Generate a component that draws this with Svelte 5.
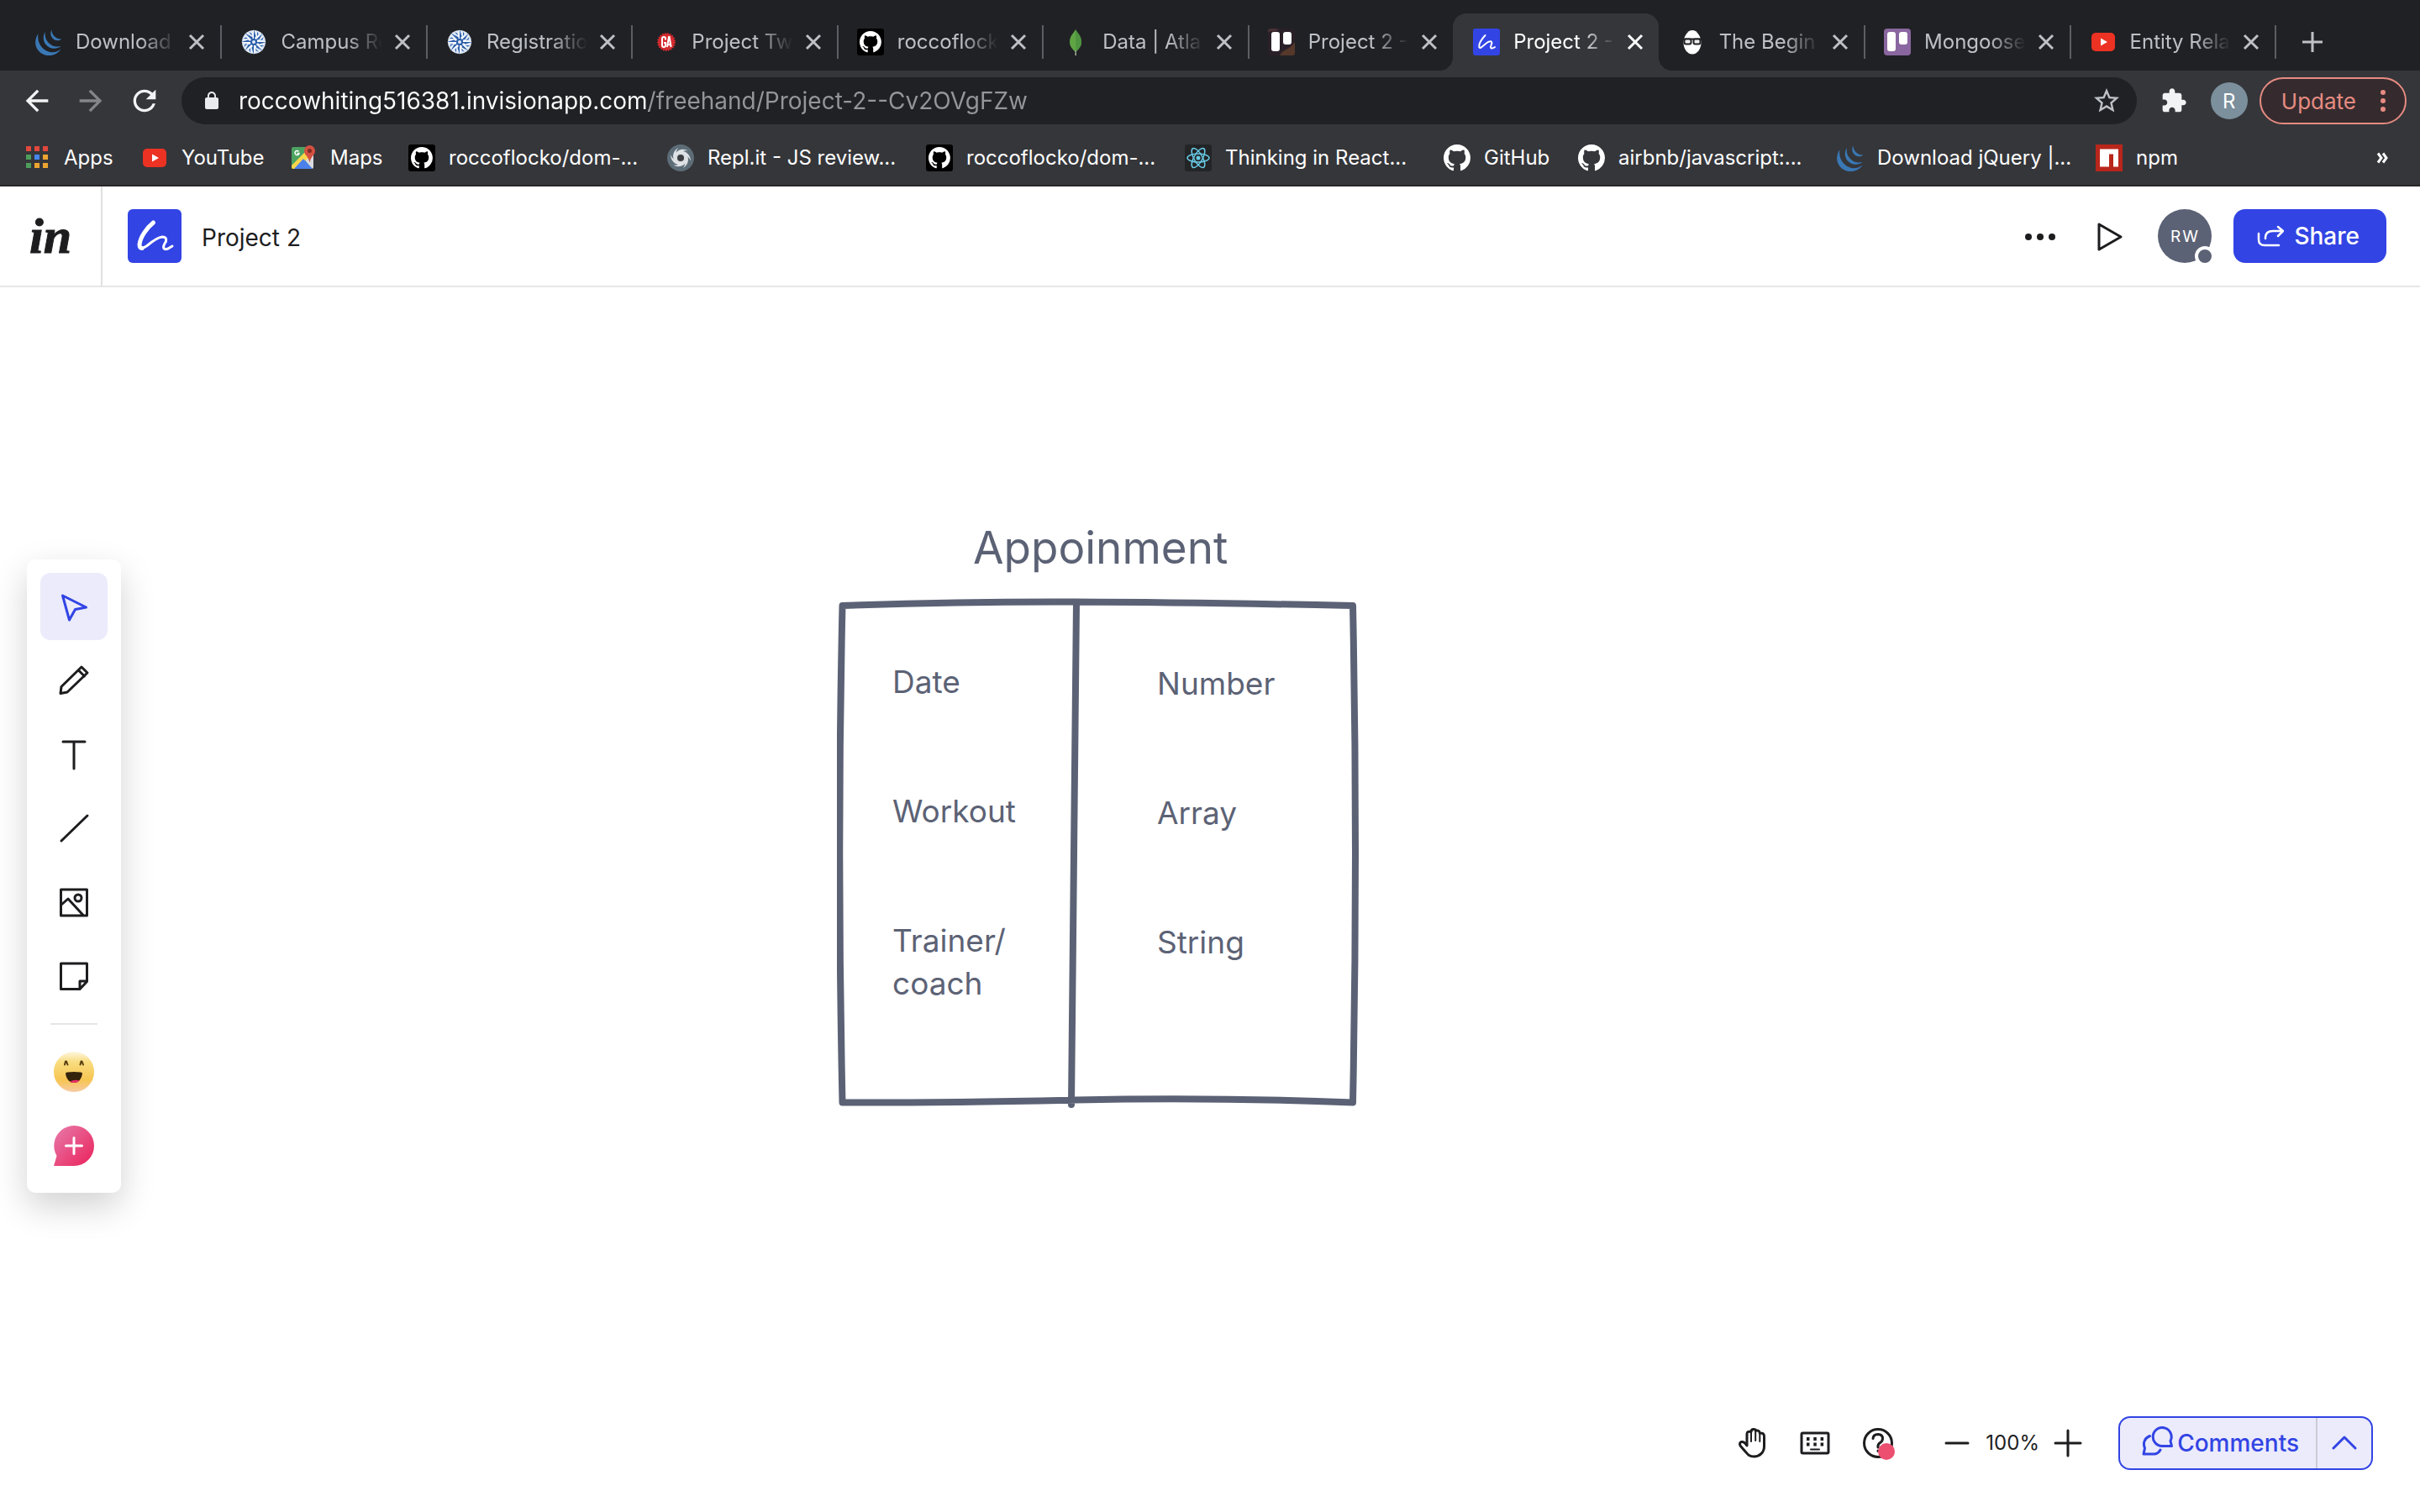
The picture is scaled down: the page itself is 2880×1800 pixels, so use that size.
<script>
  const tabs = [
    { icon: 'jquery', title: 'Download' },
    { icon: 'compass', title: 'Campus Re' },
    { icon: 'compass', title: 'Registratio' },
    { icon: 'ga', title: 'Project Tw' },
    { icon: 'githubBox', title: 'roccoflock' },
    { icon: 'mongo', title: 'Data | Atla' },
    { icon: 'trelloPhoto', title: 'Project 2 -', beforeActive: true },
    { icon: 'freehand', title: 'Project 2 -', active: true },
    { icon: 'egghead', title: 'The Begin' },
    { icon: 'trello', title: 'Mongoose' },
    { icon: 'youtube', title: 'Entity Rela' }
  ];

  const bookmarks = [
    { icon: 'apps', label: 'Apps', width: 140 },
    { icon: 'youtube', label: 'YouTube', width: 177 },
    { icon: 'maps', label: 'Maps', width: 141 },
    { icon: 'githubBox', label: 'roccoflocko/dom-...', width: 308 },
    { icon: 'replit', label: 'Repl.it - JS review...', width: 308 },
    { icon: 'githubBox', label: 'roccoflocko/dom-...', width: 308 },
    { icon: 'react', label: 'Thinking in React...', width: 308 },
    { icon: 'github', label: 'GitHub', width: 160 },
    { icon: 'github', label: 'airbnb/javascript:...', width: 308 },
    { icon: 'jquery', label: 'Download jQuery |...', width: 308 },
    { icon: 'npm', label: 'npm', width: 140 }
  ];

  const tools = [
    { id: 'select', label: 'Select' },
    { id: 'draw', label: 'Draw' },
    { id: 'text', label: 'Text' },
    { id: 'line', label: 'Line' },
    { id: 'image', label: 'Image' },
    { id: 'note', label: 'Sticky note' }
  ];

  const notes = [
    { text: 'Date', x: 1062, y: 444 },
    { text: 'Workout', x: 1062, y: 598 },
    { text: 'Trainer/\ncoach', x: 1062, y: 752 },
    { text: 'Number', x: 1377, y: 446 },
    { text: 'Array', x: 1377, y: 600 },
    { text: 'String', x: 1377, y: 754 }
  ];

  let activeTool = $state('select');
  let url = $state('roccowhiting516381.invisionapp.com/freehand/Project-2--Cv2OVgFZw');

  const octocat =
    'M8 0C3.58 0 0 3.58 0 8c0 3.54 2.29 6.53 5.47 7.59.4.07.55-.17.55-.38 0-.19-.01-.82-.01-1.49-2.01.37-2.53-.49-2.69-.94-.09-.23-.48-.94-.82-1.13-.28-.15-.68-.52-.01-.53.63-.01 1.08.58 1.23.82.72 1.21 1.87.87 2.33.66.07-.52.28-.87.51-1.07-1.78-.2-3.64-.89-3.64-3.95 0-.87.31-1.59.82-2.15-.08-.2-.36-1.02.08-2.12 0 0 .67-.21 2.2.82.64-.18 1.32-.27 2-.27s1.36.09 2 .27c1.53-1.04 2.2-.82 2.2-.82.44 1.1.16 1.92.08 2.12.51.56.82 1.27.82 2.15 0 3.07-1.87 3.75-3.65 3.95.29.25.54.73.54 1.48 0 1.07-.01 1.93-.01 2.2 0 .21.15.46.55.38A8.01 8.01 0 0 0 16 8c0-4.42-3.58-8-8-8z';
  const spokes = [0, 45, 90, 135, 180, 225, 270, 315];
  const swirls = [0, 60, 120, 180, 240, 300];
</script>

{#snippet favicon(name)}
  <svg class="favicon" viewBox="0 0 32 32" aria-hidden="true">
    {#if name === 'jquery'}
      <g fill="#3a78b5">
        <path d="M3.500 6C-.5 12-1 19 2.500 24.500c4.500 7.500 13.500 9 20 6.500 3.500-1.200 6.500-4 8-6.500-4 3.500-10.500 5-16 2.500C6 23 2 15 3.500 6z" />
        <path d="M12 4c-3 4-3 10 0 14.500 4.500 6 13 7 18.500 2.500-5 1-10 .5-13.500-3C12.500 14 11 9 12 4z" />
        <path d="M19.500 1.500c-2 3.500-1.500 7.500 1.500 10.500 3 2.800 7 3 10.500.5-3.500.2-6.500-.8-9-3.500-2-2.200-3-4.500-3-7.500z" />
      </g>
    {:else if name === 'compass'}
      <circle cx="16" cy="16" r="14" fill="#dfe9f6" />
      {#each spokes as angle}
        <g transform="rotate({angle} 16 16)">
          <path d="M16 1l3 10-3 3-3-3z" fill="#f6f9fd" />
          <path d="M16 1l3 10-3 3z" fill="#2a5ca8" />
          <path d="M20 3.500l1.500 3-1.500 3z" fill="#2a5ca8" />
        </g>
      {/each}
      <circle cx="16" cy="16" r="4" fill="#2a5ca8" />
      <circle cx="16" cy="16" r="2" fill="#dfe9f6" />
    {:else if name === 'ga'}
      <circle cx="18" cy="16" r="10" fill="#d52b30" stroke="#d52b30" stroke-dasharray="1.500 1.500" stroke-width="2" />
      <g fill="none" stroke="#fff" stroke-width="2">
        <path d="M17 13.500V12a2 2 0 0 0-4 0v8a2 2 0 0 0 4 0v-3h-2" />
        <path d="M19 22l2-12h.6l2 12M20 19h3" />
      </g>
    {:else if name === 'githubBox'}
      <rect width="32" height="32" rx="3" fill="#000" />
      <path transform="translate(3 3) scale(1.62)" d={octocat} fill="#fff" />
    {:else if name === 'github'}
      <path transform="scale(2)" d={octocat} fill="#fff" />
    {:else if name === 'mongo'}
      <path d="M16 1c1 3 7 7 7 15 0 6-4 9-6.500 11.500h-1C13 25 9 22 9 16 9 8 15 4 16 1z" fill="#5fa544" />
      <path d="M16 1c1 3 7 7 7 15 0 6-4 9-6.500 11.500z" fill="#4f9440" />
      <path d="M15.500 26h1l.5 6h-1.500z" fill="#b8bfae" />
    {:else if name === 'trelloPhoto'}
      <rect width="32" height="32" rx="3" fill="#2a2027" />
      <path d="M14 32c4-8 12-6 18-16v13a3 3 0 0 1-3 3z" fill="#56382b" />
      <path d="M0 5c5-5 9 2 12-5H3a3 3 0 0 0-3 3z" fill="#4a3037" />
      <rect x="4" y="4" width="10" height="23" rx="3" fill="#fff" />
      <rect x="18" y="4" width="10" height="15" rx="3" fill="#fff" />
    {:else if name === 'freehand'}
      <rect width="32" height="32" rx="3" fill="#3244e4" />
      <path d="M14.500 8C10 13 6.500 19 7.500 22.500c1 2.500 6-4 10.500-6.500 5-2 5 1 3.500 4-1.500 4 1 4.500 4.500 2" fill="none" stroke="#fff" stroke-width="2" stroke-linecap="round" />
    {:else if name === 'egghead'}
      <path d="M16 2c6 0 10.500 8 10.500 15S22 30.500 16 30.500 5.500 24 5.500 17 10 2 16 2z" fill="#fff" />
      <path d="M3.500 12.500h25" stroke="#202124" stroke-width="2" />
      <rect x="6.500" y="12.500" width="8" height="6" rx="2" fill="#eee" stroke="#202124" stroke-width="2" />
      <rect x="17.500" y="12.500" width="8" height="6" rx="2" fill="#eee" stroke="#202124" stroke-width="2" />
    {:else if name === 'trello'}
      <rect width="32" height="32" rx="4" fill="#8a66a0" />
      <rect x="4" y="4" width="10" height="23" rx="3" fill="#fff" />
      <rect x="18" y="4" width="10" height="15" rx="3" fill="#fff" />
    {:else if name === 'youtube'}
      <rect x="2" y="5" width="28" height="22" rx="5" fill="#eb3223" />
      <path d="M13 11.500l8 4.500-8 4.500z" fill="#fff" />
    {:else if name === 'apps'}
      <g>
        <path d="M3 2h6v6H3zM13 2h6v6h-6zM23 2h6v6h-6z" fill="#e2483d" />
        <path d="M3 12h6v6H3zM3 22h6v6H3z" fill="#4e9d5b" />
        <path d="M13 12h6v6h-6z" fill="#4787ee" />
        <path d="M23 12h6v6h-6zM13 22h6v6h-6zM23 22h6v6h-6z" fill="#eda531" />
      </g>
    {:else if name === 'maps'}
      <path d="M4 3h22v26H4a2 2 0 0 1-2-2V5a2 2 0 0 1 2-2z" fill="#4ca261" />
      <path d="M16 16l12-6v17a2 2 0 0 1-2 2z" fill="#d9dbe0" />
      <path d="M2 25l18-18 6 6L6 29H4a2 2 0 0 1-2-2z" fill="#f8d64c" />
      <path d="M5 29l11-12 11 12z" fill="#4b80ea" />
      <path d="M10.500 8.500a2.500 2.500 0 1 0 .5 2H8.500" fill="none" stroke="#fff" stroke-width="1.500" />
      <path d="M23.500 1a6.500 6.500 0 0 1 6.500 6.500c0 5-5 6.500-6.500 14-1.500-7.500-6.500-9-6.500-14A6.500 6.500 0 0 1 23.500 1z" fill="#d45040" />
      <circle cx="23.500" cy="7.500" r="2.500" fill="#7c2a22" />
    {:else if name === 'replit'}
      <circle cx="16" cy="16" r="16" fill="#5d6d77" />
      {#each swirls as angle}
        <path transform="rotate({angle} 16 16)" d="M16 9q9-1 9 10-1 6-6 9 4-6 2.500-11Q20 11 16 9z" fill="#dfe3e6" />
      {/each}
      <circle cx="16" cy="16" r="6" fill="#d9dddf" />
      <circle cx="16" cy="16" r="4" fill="#3c3e42" />
    {:else if name === 'react'}
      <rect width="32" height="32" rx="3" fill="#222426" />
      <g fill="none" stroke="#69cbe6" stroke-width="1.500">
        <ellipse cx="16" cy="16" rx="13" ry="5" />
        <ellipse cx="16" cy="16" rx="13" ry="5" transform="rotate(60 16 16)" />
        <ellipse cx="16" cy="16" rx="13" ry="5" transform="rotate(120 16 16)" />
      </g>
      <circle cx="16" cy="16" r="2.500" fill="#69cbe6" />
    {:else if name === 'npm'}
      <rect width="32" height="32" fill="#b9261b" />
      <path d="M5 5.500h22v21h-6v-15h-5v15H5z" fill="#fff" />
    {/if}
  </svg>
{/snippet}

<div class="window">
  <header class="chrome">
    <nav class="tab-strip" aria-label="Browser tabs">
      <div class="tabs">
        {#each tabs as tab}
          <div class="tab" class:active={tab.active} class:plain={tab.active || tab.beforeActive}>
            <button class="tab-main">
              {@render favicon(tab.icon)}
              <span class="tab-title">{tab.title}</span>
            </button>
            <button class="tab-close" aria-label="Close tab">
              <svg viewBox="0 0 20 20"><path d="M2 2l16 16M18 2L2 18" /></svg>
            </button>
          </div>
        {/each}
      </div>
      <button class="new-tab" aria-label="New tab">
        <svg viewBox="0 0 24 24"><path d="M12 0v24M0 12h24" /></svg>
      </button>
    </nav>

    <div class="toolbar">
      <button class="nav" aria-label="Back">
        <svg viewBox="0 0 24 24"><path d="M20 11H7.830l5.590-5.590L12 4l-8 8 8 8 1.410-1.410L7.830 13H20v-2z" /></svg>
      </button>
      <button class="nav dim" aria-label="Forward">
        <svg viewBox="0 0 24 24"><path d="M12 4l-1.410 1.410L16.170 11H4v2h12.170l-5.580 5.590L12 20l8-8z" /></svg>
      </button>
      <button class="nav" aria-label="Reload">
        <svg viewBox="0 0 24 24"><path d="M17.650 6.350C16.200 4.900 14.210 4 12 4c-4.420 0-7.990 3.580-7.990 8s3.570 8 7.990 8c3.730 0 6.840-2.550 7.730-6h-2.080c-.82 2.330-3.040 4-5.650 4-3.310 0-6-2.690-6-6s2.690-6 6-6c1.660 0 3.140.69 4.220 1.780L13 11h7V4l-2.350 2.350z" /></svg>
      </button>
      <div class="omnibox">
        <svg class="lock" viewBox="0 0 24 24" aria-hidden="true"><path d="M18 8h-1V6c0-2.760-2.240-5-5-5S7 3.240 7 6v2H6c-1.100 0-2 .9-2 2v10c0 1.100.9 2 2 2h12c1.100 0 2-.9 2-2V10c0-1.100-.9-2-2-2zM8.900 6c0-1.710 1.390-3.100 3.100-3.100 1.710 0 3.100 1.390 3.100 3.100v2H8.900V6z" /></svg>
        <input class="url" type="text" aria-label="Address" bind:value={url} />
        <button class="star" aria-label="Bookmark this page">
          <svg viewBox="0 0 24 24"><path d="M22 9.240l-7.190-.62L12 2 9.190 8.630 2 9.240l5.460 4.730L5.820 21 12 17.270 18.180 21l-1.630-7.030L22 9.240zM12 15.400l-3.760 2.270 1-4.280-3.320-2.880 4.380-.38L12 6.100l1.710 4.040 4.380.38-3.320 2.880 1 4.280L12 15.400z" /></svg>
        </button>
      </div>
      <button class="extensions" aria-label="Extensions">
        <svg viewBox="0 0 24 24"><path d="M20.500 11H19V7c0-1.100-.9-2-2-2h-4V3.500C13 2.120 11.880 1 10.500 1S8 2.120 8 3.500V5H4c-1.100 0-1.990.9-1.990 2v3.800H3.500c1.490 0 2.700 1.210 2.700 2.700s-1.210 2.700-2.700 2.700H2V20c0 1.100.9 2 2 2h3.800v-1.500c0-1.490 1.210-2.700 2.700-2.700 1.490 0 2.700 1.210 2.700 2.700V22H17c1.100 0 2-.9 2-2v-4h1.500c1.380 0 2.500-1.120 2.500-2.500S21.880 11 20.500 11z" /></svg>
      </button>
      <button class="profile">R</button>
      <button class="update">
        Update
        <svg viewBox="0 0 8 28" aria-hidden="true"><circle cx="4" cy="4" r="3" /><circle cx="4" cy="14" r="3" /><circle cx="4" cy="24" r="3" /></svg>
      </button>
    </div>

    <nav class="bookmarks" aria-label="Bookmarks">
      {#each bookmarks as mark}
        <a class="bookmark" href="#{mark.icon}" style="width: {mark.width}px">
          {@render favicon(mark.icon)}
          <span>{mark.label}</span>
        </a>
      {/each}
      <button class="overflow" aria-label="More bookmarks">
        <svg viewBox="0 0 14 14"><path d="M2 1.500L6 7l-4 5.500M8 1.500L12 7l-4 5.500" /></svg>
      </button>
    </nav>
  </header>

  <div class="app-bar">
    <a class="brand" href="#home" aria-label="InVision home">in</a>
    <svg class="doc-logo" viewBox="0 0 64 64" aria-hidden="true">
      <rect width="64" height="64" rx="6" fill="#3244e4" />
      <g fill="none" stroke="#fff" stroke-linecap="round" stroke-linejoin="round">
        <path d="M30.500 16C23 22 15 33 14 42c0 3 1 4.500 3 4.500" stroke-width="5" />
        <path d="M14 42c0 6 5 4.500 9 1.500 6-5 12-10 18-10.500 6 0 5.500 4.500 3 8-3 5-1 8 4 6l5-3" stroke-width="3" />
      </g>
    </svg>
    <h1>Project 2</h1>
    <div class="app-actions">
      <button class="bare" aria-label="More options">
        <svg viewBox="0 0 48 48" fill="#1d1d1f"><circle cx="10" cy="25" r="4" /><circle cx="24" cy="25" r="4" /><circle cx="38" cy="25" r="4" /></svg>
      </button>
      <button class="bare" aria-label="Present">
        <svg viewBox="0 0 48 48" fill="none" stroke="#1d1d1f" stroke-width="3" stroke-linejoin="round"><path d="M12 10v30l26-15z" /></svg>
      </button>
      <button class="user" aria-label="Account">RW<span class="presence"></span></button>
      <button class="share">
        <svg viewBox="0 0 32 32" fill="none" stroke="#fff" stroke-width="2.500" stroke-linecap="round" stroke-linejoin="round" aria-hidden="true">
          <path d="M2 13v7q0 7 7 7h17M10 19v-1q0-8 9-8h12M25 5l6 5-6 6" />
        </svg>
        Share
      </button>
    </div>
  </div>

  <main class="canvas">
    <section class="board" aria-label="Appoinment model">
      <svg class="sketch" viewBox="0 0 624 608" aria-hidden="true">
        <path d="M6.500 9Q150 4 284 4.500T614 9Q620 300 614 600.500Q450 594 284 597.500T6.500 600.500Q0 300 6.500 9zM285 6Q283 300 279 603" />
      </svg>
      <h2>Appoinment</h2>
      {#each notes as note}
        <p class="note" style="left: {note.x}px; top: {note.y}px">{note.text}</p>
      {/each}
    </section>

    <div class="toolbox" role="toolbar" aria-label="Drawing tools">
      {#each tools as tool}
        <button class="tool" class:selected={activeTool === tool.id} aria-label={tool.label} onclick={() => (activeTool = tool.id)}>
          <svg viewBox="0 0 40 40">
            {#if tool.id === 'select'}
              <path d="M6.500 7l28 14-13 2.500-7 12.500z" />
            {:else if tool.id === 'draw'}
              <path d="M29 4l7 7-24 23-8 1.500 1-8zM25.500 8l7 7" />
            {:else if tool.id === 'text'}
              <path d="M7 5h26M20 5v32" />
            {:else if tool.id === 'line'}
              <path d="M5 35L36 5" />
            {:else if tool.id === 'image'}
              <path d="M4.500 5h31v31h-31zM4.500 23.500L13 16l18.500 20" />
              <circle cx="25" cy="15" r="4" />
            {:else}
              <path d="M4.500 5h31v21.500L27 35.500H4.500zM27 35.500V26h8.500" />
            {/if}
          </svg>
        </button>
      {/each}
      <hr />
      <button class="tool" aria-label="Reactions">
        <svg class="large" viewBox="0 0 48 48">
          <defs>
            <linearGradient id="face" x1="0" y1="0" x2="0" y2="1">
              <stop offset="0" stop-color="#fdf6e0" />
              <stop offset="0.250" stop-color="#f9dd80" />
              <stop offset="0.700" stop-color="#f6c552" />
              <stop offset="1" stop-color="#f8cba4" />
            </linearGradient>
          </defs>
          <circle class="fill" cx="24" cy="24" r="24" fill="url(#face)" />
          <path d="M13 15.500l1-4h1l1.500 4M31.500 15.500l1-4h1l1.500 4" class="thin" stroke="#5a3f14" />
          <path d="M14 26q0-1.500 2-1.500 8-1 16 0 2 0 2 1.500c-1 7-5 11-10 11s-9-4-10-11z" class="fill" fill="#35240c" />
          <path d="M19 36q5-3.500 12-1.500-3 2.500-7 2.500-3 0-5-1z" class="fill" fill="#ea2f68" />
        </svg>
      </button>
      <button class="tool" aria-label="Add comment">
        <svg class="large" viewBox="0 0 48 48">
          <defs>
            <linearGradient id="bubble" x1="0" y1="0" x2="1" y2="1">
              <stop offset="0.100" stop-color="#e773a3" />
              <stop offset="0.900" stop-color="#ea2a62" />
            </linearGradient>
          </defs>
          <path d="M24 0a24 24 0 0 1 0 48H0l3.500-12A24 24 0 0 1 24 0z" class="fill" fill="url(#bubble)" />
          <path d="M24 14.500v19M14.500 24h19" stroke="#fff" />
        </svg>
      </button>
    </div>

    <div class="view-controls">
      <div class="helpers">
        <button class="bare small" aria-label="Pan">
          <svg viewBox="0 0 40 40">
            <path d="M14 23V9q0-3.500 5-2.500 0-3 2.800-3 2.700 0 2.700 1.700Q29 4.500 29.300 8q5.200-.5 5.200 4v12c0 7-5.500 12-12 12-5.500 0-7.500-2.500-10-5.500L6 23q-1.500-3.500 1.500-4.500Q11 18 14 23z" />
            <path d="M19 7v11M24.200 5v12M29.300 8v10" class="thin" />
          </svg>
        </button>
        <button class="bare small" aria-label="Keyboard shortcuts">
          <svg viewBox="0 0 40 40">
            <rect x="4" y="8" width="32" height="24" rx="1.500" />
            <path d="M10 15h3.500M18.300 15h3.500M26.600 15h3.500M10 21.500h3.500M18.300 21.500h3.500M26.600 21.500h3.500" class="keys" />
            <path d="M15 27.500h10" class="thin" />
          </svg>
        </button>
        <button class="bare small" aria-label="Help">
          <svg viewBox="0 0 40 40">
            <circle cx="20" cy="20" r="16.500" />
            <path d="M14 14.500q.5-5 6-5 5.500.2 5.500 5 0 3-3 5t-2.500 5v.5M20 29v.5" />
            <circle cx="30" cy="30" r="10" class="alert" />
          </svg>
        </button>
      </div>
      <div class="zoom">
        <button class="bare small" aria-label="Zoom out"><svg viewBox="0 0 40 40"><path d="M7 20h26" /></svg></button>
        <output>100%</output>
        <button class="bare small" aria-label="Zoom in"><svg viewBox="0 0 40 40"><path d="M5 20h30M20 5v30" /></svg></button>
      </div>
      <div class="comments">
        <button class="comments-main">
          <svg viewBox="0 0 40 40" aria-hidden="true"><path d="M35.500 23.500H24A11 11 0 1 1 34 17.500zM9.500 11.500C3 14 1 20 3.500 26L2 33h12q5.500 0 8-5" /></svg>
          Comments
        </button>
        <button class="comments-toggle" aria-label="Show comments">
          <svg viewBox="0 0 32 20" aria-hidden="true"><path d="M3 16L16 3l13 13" /></svg>
        </button>
      </div>
    </div>
  </main>
</div>

<style>
  :global(body) {
    background: #fff;
  }

  .window {
    display: flex;
    flex-direction: column;
    min-height: 100vh;
    font-family: Inter, 'Liberation Sans', sans-serif;
    color: #1d1d1f;
  }

  button {
    display: flex;
    align-items: center;
    justify-content: center;
    margin: 0;
    padding: 0;
    border: 0;
    background: none;
    color: inherit;
    font: inherit;
    cursor: pointer;
  }

  svg {
    display: block;
    flex: none;
  }

  .favicon {
    width: 32px;
    height: 32px;
  }

  .chrome {
    background: #35363a;
    border-bottom: 2px solid #292628;
  }

  .tab-strip {
    display: flex;
    padding: 16px 0 0 18px;
    background: #202124;
  }

  .tabs {
    display: flex;
    flex: 1;
    min-width: 0;
  }

  .tab {
    position: relative;
    display: flex;
    flex: 1 1 0;
    align-items: center;
    min-width: 0;
    height: 68px;
    color: #bdc1c6;
  }

  .tab::after {
    content: '';
    width: 2px;
    height: 40px;
    margin-right: -2px;
    background: #5b5e63;
  }

  .tab.plain::after {
    background: none;
  }

  .tab.active {
    border-radius: 16px 16px 0 0;
    background: #35363a;
    color: #fff;
  }

  .tab.active::before,
  .tab.active::after {
    content: '';
    position: absolute;
    bottom: 0;
    width: 16px;
    height: 16px;
    margin: 0;
  }

  .tab.active::before {
    right: 100%;
    background: radial-gradient(circle at 0 0, transparent 16px, #35363a 16px);
  }

  .tab.active::after {
    left: 100%;
    background: radial-gradient(circle at 100% 0, transparent 16px, #35363a 16px);
  }

  .tab-main {
    flex: 1;
    justify-content: flex-start;
    gap: 16px;
    min-width: 0;
    padding-left: 24px;
  }

  .tab-title {
    flex: 1;
    overflow: hidden;
    font-size: 24px;
    line-height: 32px;
    text-align: left;
    white-space: nowrap;
    mask-image: linear-gradient(to right, #000 64%, transparent);
  }

  .tab-close {
    width: 20px;
    margin: 0 18px 0 14px;
  }

  .tab-close svg {
    width: 20px;
    height: 20px;
    stroke: currentColor;
    stroke-width: 3px;
  }

  .new-tab {
    width: 173px;
    padding-right: 84px;
    box-sizing: border-box;
    color: #bdc1c6;
  }

  .new-tab svg {
    width: 24px;
    height: 24px;
    stroke: currentColor;
    stroke-width: 3px;
  }

  .toolbar {
    display: flex;
    align-items: center;
    gap: 24px;
    padding: 8px 16px 8px 24px;
  }

  .nav {
    width: 40px;
    height: 40px;
    color: #f1f3f4;
  }

  .nav.dim {
    color: #848588;
  }

  .nav svg {
    width: 40px;
    height: 40px;
    fill: currentColor;
  }

  .omnibox {
    display: flex;
    flex: 1;
    align-items: center;
    gap: 20px;
    height: 56px;
    padding: 0 18px 0 24px;
    border-radius: 28px;
    background: #202124;
  }

  .lock {
    width: 24px;
    height: 24px;
    fill: #e8eaed;
  }

  .url {
    flex: 1;
    min-width: 0;
    padding: 0;
    border: 0;
    outline: 0;
    background: linear-gradient(to right, #fff 488px, #949699 488px) text;
    color: transparent;
    font: 28px/36px Inter, 'Liberation Sans', sans-serif;
  }

  .star svg {
    width: 36px;
    height: 36px;
    fill: #bdc1c6;
  }

  .extensions {
    width: 40px;
    height: 40px;
  }

  .extensions svg {
    width: 32px;
    height: 32px;
    fill: #f1f3f4;
  }

  .profile {
    width: 44px;
    height: 44px;
    border-radius: 50%;
    background: #7b8f9c;
    color: #fff;
    font-size: 24px;
  }

  .update {
    gap: 28px;
    height: 56px;
    margin-left: -10px;
    padding: 0 22px 0 24px;
    border: 2px solid #e68b82;
    border-radius: 28px;
    background: #352b2e;
    color: #e68b82;
    font-size: 26px;
  }

  .update svg {
    width: 8px;
    height: 28px;
    fill: currentColor;
  }

  .bookmarks {
    display: flex;
    align-items: center;
    height: 64px;
    padding: 0 38px 0 28px;
  }

  .bookmark {
    display: flex;
    align-items: center;
    gap: 16px;
    color: #fff;
    font-size: 24px;
    line-height: 32px;
    text-decoration: none;
    white-space: nowrap;
  }

  .overflow {
    margin-left: auto;
  }

  .overflow svg {
    width: 14px;
    height: 14px;
    fill: none;
    stroke: #fff;
    stroke-width: 3px;
  }

  .app-bar {
    display: flex;
    align-items: center;
    height: 118px;
    padding-right: 40px;
    border-bottom: 2px solid #e6e6e6;
  }

  .brand {
    display: flex;
    align-items: center;
    justify-content: center;
    align-self: stretch;
    width: 120px;
    border-right: 2px solid #e0e0e0;
    color: #1d1d1f;
    font: italic bold 60px/60px 'Liberation Serif', serif;
    text-decoration: none;
    -webkit-text-stroke: 1px #1d1d1f;
  }

  .doc-logo {
    width: 64px;
    height: 64px;
    margin: 0 24px 0 30px;
  }

  h1 {
    margin: 0;
    padding-top: 4px;
    font-size: 28px;
    font-weight: 400;
    line-height: 36px;
  }

  .app-actions {
    display: flex;
    align-items: center;
    margin-left: auto;
  }

  .bare {
    width: 48px;
    height: 48px;
    margin-right: 34px;
  }

  .bare svg {
    width: 48px;
    height: 48px;
  }

  .user {
    position: relative;
    width: 64px;
    height: 64px;
    margin-right: 26px;
    border-radius: 50%;
    background: #5c6275;
    color: #fff;
    font-size: 19px;
    letter-spacing: 2px;
  }

  .presence {
    position: absolute;
    right: -4px;
    bottom: -4px;
    width: 16px;
    height: 16px;
    border: 4px solid #fff;
    border-radius: 50%;
    background: #5c6275;
  }

  .share {
    gap: 12px;
    height: 64px;
    padding: 0 32px 0 28px;
    border-radius: 14px;
    background: #3244e4;
    color: #fff;
    font-size: 28px;
    font-weight: 500;
  }

  .share svg {
    width: 32px;
    height: 32px;
  }

  .canvas {
    position: relative;
    flex: 1;
    min-height: 1200px;
    overflow: hidden;
  }

  .board {
    color: #5c6275;
  }

  .sketch {
    position: absolute;
    left: 996px;
    top: 370px;
    width: 624px;
    height: 608px;
    fill: none;
    stroke: #5c6275;
    stroke-width: 8px;
    stroke-linecap: round;
    stroke-linejoin: round;
  }

  h2 {
    position: absolute;
    left: 1158px;
    top: 276px;
    margin: 0;
    font-size: 53px;
    font-weight: 400;
    line-height: 68px;
  }

  .note {
    position: absolute;
    margin: 0;
    font-size: 37px;
    line-height: 51px;
    white-space: pre;
  }

  .toolbox {
    position: absolute;
    left: 32px;
    top: 324px;
    display: flex;
    flex-direction: column;
    gap: 8px;
    padding: 16px;
    border-radius: 10px;
    background: #fff;
    box-shadow: 0 16px 40px rgba(0, 0, 0, 0.18);
  }

  .tool {
    width: 80px;
    height: 80px;
    border-radius: 12px;
  }

  .tool.selected {
    background: #ebebfb;
    color: #3244e4;
  }

  .tool svg {
    width: 40px;
    height: 40px;
    fill: none;
    stroke: currentColor;
    stroke-width: 3px;
    stroke-linecap: round;
    stroke-linejoin: round;
  }

  .tool .large {
    width: 48px;
    height: 48px;
  }

  .tool .fill {
    stroke: none;
  }

  .tool .thin,
  .small .thin {
    stroke-width: 2px;
  }

  hr {
    width: 56px;
    height: 2px;
    margin: 8px auto;
    border: 0;
    background: #e6e6e6;
  }

  .view-controls {
    position: absolute;
    right: 56px;
    bottom: 50px;
    display: flex;
    align-items: center;
    gap: 40px;
  }

  .helpers {
    display: flex;
    gap: 35px;
    margin-right: 14px;
  }

  .bare.small {
    width: 40px;
    height: 40px;
    margin: 0;
  }

  .small svg {
    width: 40px;
    height: 40px;
    fill: none;
    stroke: #1d1d1f;
    stroke-width: 3px;
    stroke-linecap: round;
    stroke-linejoin: round;
  }

  .small .keys {
    stroke-width: 4px;
    stroke-linecap: butt;
  }

  .small .alert {
    fill: #ec4f70;
    stroke: none;
  }

  .zoom {
    display: flex;
    align-items: center;
  }

  output {
    width: 92px;
    font-size: 24px;
    line-height: 32px;
    text-align: center;
  }

  .comments {
    display: flex;
    height: 60px;
    border: 2px solid #3244e4;
    border-radius: 14px;
    background: #ebebfb;
    color: #3244e4;
  }

  .comments svg {
    fill: none;
    stroke: currentColor;
    stroke-width: 3px;
    stroke-linecap: round;
    stroke-linejoin: round;
  }

  .comments-main {
    gap: 2px;
    padding: 0 20px 0 26px;
    font-size: 28px;
    font-weight: 500;
  }

  .comments-main svg {
    width: 40px;
    height: 40px;
  }

  .comments-toggle {
    width: 66px;
    border-left: 2px solid #c9cbd6;
  }

  .comments-toggle svg {
    width: 32px;
    height: 20px;
  }
</style>
